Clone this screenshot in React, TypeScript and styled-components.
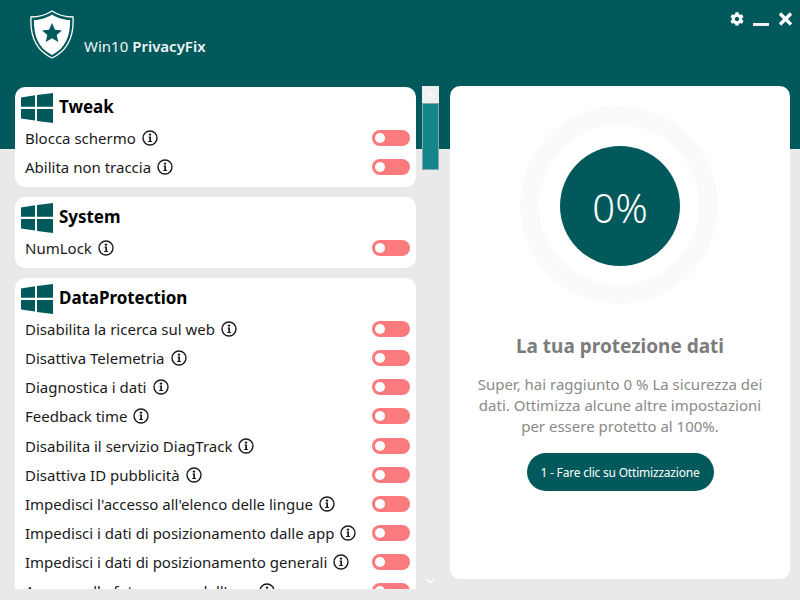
import React from 'react'
import styled, { createGlobalStyle } from 'styled-components'
import { FaCog } from 'react-icons/fa'

const GlobalStyle = createGlobalStyle`
html, body { margin: 0; padding: 0; }
body { font-family: "Noto Sans", "Open Sans", "Liberation Sans", sans-serif; }
`

const Page = styled.div`
width: 800px;
height: 600px;
overflow: hidden;
display: flex;
flex-direction: column;
background: linear-gradient(#02595c 0, #02595c 149px, #e9e9ea 149px, #e9e9ea 100%);
`

const TopBar = styled.div`
height: 86px;
flex: none;
display: flex;
justify-content: space-between;
`

const Brand = styled.div`
display: flex;
align-items: flex-start;
padding: 10px 0 0 30px;
`

const BrandText = styled.div`
margin: 26px 0 0 10px;
color: #eef5f5;
font-size: 15px;
line-height: 20px;
b { font-weight: 600; }
`

const WindowButtons = styled.div`
display: flex;
align-items: flex-start;
padding: 12px 7px 0 0;
color: #fff;
svg { display: block; }
`

const MinButton = styled.div`
width: 16px;
height: 3px;
margin: 11px 9px 0 9px;
background: #f4eef4;
`

const Content = styled.div`
flex: 1;
display: flex;
padding: 0 10px 21px 15px;
min-height: 0;
`

const ListViewport = styled.div`
width: 401px;
height: 502px;
margin-top: 1px;
overflow: hidden;
flex: none;
display: flex;
flex-direction: column;
gap: 10px;
`

const Card = styled.div`
background: #fff;
border-radius: 10px;
padding: 6px;
flex: none;
`

const CardTitle = styled.div`
display: flex;
align-items: center;
gap: 6px;
height: 30px;
font-size: 17px;
line-height: 26px;
padding-bottom: 2px;
box-sizing: border-box;
font-weight: 700;
color: #000;
letter-spacing: -0.05px;
svg { margin-bottom: -2px; }
`

const Row = styled.div`
display: flex;
align-items: center;
justify-content: space-between;
height: 29.15px;
padding-left: 4px;
`

const RowLabel = styled.div`
display: flex;
align-items: center;
gap: 6px;
font-size: 15px;
color: #1a1a1a;
white-space: nowrap;
`

const Toggle = styled.div`
width: 38px;
height: 16px;
border-radius: 8px;
background: #fb7a7e;
display: flex;
align-items: center;
padding-left: 3px;
box-sizing: border-box;
&::before {
  content: "";
  width: 10px;
  height: 10px;
  border-radius: 50%;
  background: #fff;
}
`

const ScrollBar = styled.div`
width: 17px;
margin-left: 6px;
flex: none;
display: flex;
flex-direction: column;
background: #e9e9ea;
height: 503px;
`

const ScrollUp = styled.div`
height: 17px;
background: #f0f0f1;
display: flex;
align-items: center;
justify-content: center;
`

const ScrollThumb = styled.div`
height: 67px;
box-sizing: border-box;
background: #14868c;
border: 1px solid #8ea6aa;
`

const ScrollDown = styled.div`
margin-top: auto;
height: 17px;
display: flex;
align-items: center;
justify-content: center;
`

const SidePanel = styled.div`
width: 340px;
height: 493px;
margin-left: 11px;
flex: none;
background: #fff;
border-radius: 10px;
display: flex;
flex-direction: column;
align-items: center;
`

const Ring = styled.div`
width: 160px;
height: 160px;
margin: 20px 2px 0 0;
border: 19px solid #fafafa;
border-radius: 50%;
display: flex;
align-items: center;
justify-content: center;
`

const Progress = styled.div`
width: 120px;
height: 120px;
flex: none;
margin: 2px 0 0 2px;
border-radius: 50%;
background: #02595c;
color: #fff;
font-size: 40px;
font-weight: 300;
box-sizing: border-box;
padding-top: 3px;
display: flex;
align-items: center;
justify-content: center;
`

const PanelTitle = styled.div`
margin-top: 28px;
font-size: 19px;
line-height: 28px;
font-weight: 700;
color: #7c7c7c;
`

const PanelText = styled.div`
margin-top: 14px;
width: 300px;
text-align: center;
font-size: 15px;
line-height: 21px;
color: #8a8a8a;
`

const OptimizeButton = styled.button`
margin-top: 16px;
width: 187px;
height: 38px;
border: 0;
border-radius: 19px;
background: #02595c;
color: #fff;
font-family: inherit;
font-size: 12px;
letter-spacing: -0.2px;
padding: 0;
`

const Shield = () => (
  <svg width="44" height="49" viewBox="0 0 44 49">
    <path d="M22 1 C28 5 36 7 43 7 C44 24 39 40 22 48 C5 40 0 24 1 7 C8 7 16 5 22 1 Z" fill="none" stroke="#fff" strokeWidth="1.3" />
    <path d="M22 4.5 C28 8.5 35 10 40 10 C40.5 25 36 38 22 45 C8 38 3.5 25 4 10 C9 10 16 8.5 22 4.5 Z" fill="#fff" />
    <path d="M22 13 L25 19.8 L32 20.4 L26.7 25 L28.3 32 L22 28.3 L15.7 32 L17.3 25 L12 20.4 L19 19.8 Z" fill="#02595c" />
  </svg>
)

const WinLogo = () => (
  <svg width="32" height="30" viewBox="0 0 32 30">
    <path d="M0 4.5 L14 2.3 V13.8 H0 Z M16 2 L32 0 V13.8 H16 Z M0 16 H14 V27.6 L0 25.5 Z M16 16 H32 V30 L16 27.9 Z" fill="#02595c" />
  </svg>
)

const InfoIcon = () => (
  <svg width="16" height="16" viewBox="0 0 16 16">
    <circle cx="8" cy="8" r="7" fill="none" stroke="#1a1a1a" strokeWidth="1.4" />
    <path d="M6.5 6.6 H9 V11 H10 V12 H6.2 V11 H7.3 V7.6 H6.5 Z" fill="#1a1a1a" />
    <circle cx="8" cy="4.6" r="1.2" fill="#1a1a1a" />
  </svg>
)

const CloseIcon = () => (
  <svg width="15" height="14" viewBox="0 0 15 14">
    <path d="M2 1.5 L13 12.5 M13 1.5 L2 12.5" fill="none" stroke="#fff" strokeWidth="3.4" />
  </svg>
)

const Chevron = ({ up }: { up?: boolean }) => (
  <svg width="9" height="6" viewBox="0 0 9 6">
    <path d={up ? 'M0.5 5 L4.5 1 L8.5 5' : 'M0.5 1 L4.5 5 L8.5 1'} fill="none" stroke="#fff" strokeWidth="1.2" />
  </svg>
)

const sections = [
  { title: 'Tweak', rows: ['Blocca schermo', 'Abilita non traccia'] },
  { title: 'System', rows: ['NumLock'] },
  {
    title: 'DataProtection',
    rows: [
      'Disabilita la ricerca sul web',
      'Disattiva Telemetria',
      'Diagnostica i dati',
      'Feedback time',
      'Disabilita il servizio DiagTrack',
      'Disattiva ID pubblicità',
      "Impedisci l'accesso all'elenco delle lingue",
      'Impedisci i dati di posizionamento dalle app',
      'Impedisci i dati di posizionamento generali',
      "Accesso alla fotocamera dell'app",
    ],
  },
]

const App = () => {
  return (
    <Page>
      <GlobalStyle />
      <TopBar>
        <Brand>
          <Shield />
          <BrandText>Win10 <b>PrivacyFix</b></BrandText>
        </Brand>
        <WindowButtons>
          <FaCog size={14} />
          <MinButton />
          <CloseIcon />
        </WindowButtons>
      </TopBar>
      <Content>
        <ListViewport>
          {sections.map((s) => (
            <Card key={s.title}>
              <CardTitle><WinLogo />{s.title}</CardTitle>
              {s.rows.map((r) => (
                <Row key={r}>
                  <RowLabel>{r}<InfoIcon /></RowLabel>
                  <Toggle />
                </Row>
              ))}
            </Card>
          ))}
        </ListViewport>
        <ScrollBar>
          <ScrollUp><Chevron up /></ScrollUp>
          <ScrollThumb />
          <ScrollDown><Chevron /></ScrollDown>
        </ScrollBar>
        <SidePanel>
          <Ring><Progress>0%</Progress></Ring>
          <PanelTitle>La tua protezione dati</PanelTitle>
          <PanelText>Super, hai raggiunto 0 % La sicurezza dei dati. Ottimizza alcune altre impostazioni per essere protetto al 100%.</PanelText>
          <OptimizeButton>1 - Fare clic su Ottimizzazione</OptimizeButton>
        </SidePanel>
      </Content>
    </Page>
  )
}

export default App
